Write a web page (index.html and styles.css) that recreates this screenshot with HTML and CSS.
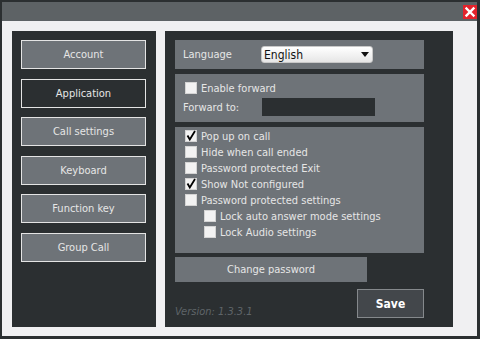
FILE: index.html
```html
<!DOCTYPE html>
<html>
	<head>
		<title>Settings</title>
		<meta charset="utf-8">
		<link rel="stylesheet" href="styles.css">
	</head>

	<body>
		<div class="window">
			<div class="titlebar">
				<div class="close">
					<svg width="14" height="14" viewBox="0 0 14 14"><path d="M3.5 3.5 L10.5 10.5 M10.5 3.5 L3.5 10.5" stroke="#fff" stroke-width="2.4" stroke-linecap="square"/></svg>
				</div>
			</div>
			<div class="content">
				<div class="menu">
					<div class="menu-btn">Account</div>
					<div class="menu-btn active">Application</div>
					<div class="menu-btn">Call settings</div>
					<div class="menu-btn">Keyboard</div>
					<div class="menu-btn">Function key</div>
					<div class="menu-btn">Group Call</div>
				</div>
				<div class="pane">
					<div class="section lang">
						<span class="label">Language</span>
						<div class="select">
							<span>English</span>
							<svg width="8" height="5" viewBox="0 0 8 5"><path d="M0 0 H8 L4 5 Z" fill="#111"/></svg>
						</div>
					</div>

					<div class="section forward">
						<div class="check-row">
							<span class="box"></span>Enable forward
						</div>
						<div class="fwd-row">
							<span class="label">Forward to:</span>
							<div class="input"></div>
						</div>
					</div>

					<div class="section options">
						<div class="check-row"><span class="box checked"><svg width="12" height="12" viewBox="0 0 12 12"><path d="M2.5 5.5 L4.8 9.5 L10 1" stroke="#000" stroke-width="1.8" fill="none"/></svg></span>Pop up on call</div>
						<div class="check-row"><span class="box"></span>Hide when call ended</div>
						<div class="check-row"><span class="box"></span>Password protected Exit</div>
						<div class="check-row"><span class="box checked"><svg width="12" height="12" viewBox="0 0 12 12"><path d="M2.5 5.5 L4.8 9.5 L10 1" stroke="#000" stroke-width="1.8" fill="none"/></svg></span>Show Not configured</div>
						<div class="check-row"><span class="box"></span>Password protected settings</div>
						<div class="check-row sub"><span class="box"></span>Lock auto answer mode settings</div>
						<div class="check-row sub"><span class="box"></span>Lock Audio settings</div>
					</div>

					<div class="change-btn">Change password</div>

					<div class="footer">
						<span class="version">Version: 1.3.3.1</span>
						<div class="save-btn">Save</div>
					</div>
				</div>
			</div>
		</div>
	</body>
</html>
```

FILE: styles.css
```css
html,body {
	margin: 0;
	padding: 0;
	background-color: #2b2f31;
}

body {
	font-family: 'DejaVu Sans Condensed', 'Liberation Sans', sans-serif;
	font-size: 11px;
	color: #e6e6e6;
}

.window {
	width: 480px;
	height: 339px;
	box-sizing: border-box;
	border: 2px solid #2b2f31;
	border-right-width: 3px;
	border-bottom-width: 3px;
	display: flex;
	flex-direction: column;
}

.titlebar {
	height: 19px;
	background-color: #5d6265;
	display: flex;
	justify-content: flex-end;
	align-items: flex-start;
}

.close {
	width: 14px;
	height: 14px;
	margin-top: 3px;
	background-color: #e3222b;
}

.close svg {
	display: block;
}

.content {
	flex: 1;
	background-color: #f0f0f2;
	padding: 10px 24px 9px 10px;
	display: flex;
	gap: 9px;
}

.menu {
	width: 144px;
	box-sizing: border-box;
	background-color: #2b2f31;
	padding: 9px 0 0 9px;
	display: flex;
	flex-direction: column;
	gap: 9.5px;
}

.menu-btn {
	width: 125px;
	height: 29px;
	box-sizing: border-box;
	border: 1px solid #e4e4e4;
	background-color: #6e7378;
	display: flex;
	align-items: center;
	justify-content: center;
}

.menu-btn.active {
	background-color: #2b2f31;
}

.pane {
	flex: 1;
	background-color: #2b2f31;
	padding: 9px 29px 9px 10px;
	display: flex;
	flex-direction: column;
}

.section {
	background-color: #6e7378;
	box-sizing: border-box;
}

.lang {
	height: 29px;
	display: flex;
	align-items: center;
	padding-left: 8px;
}

.lang .label {
	width: 78px;
}

.select {
	width: 112px;
	height: 17px;
	box-sizing: border-box;
	border: 1px solid #c8c8c8;
	border-radius: 3px;
	background: linear-gradient(#ffffff, #e6e6e6);
	color: #111;
	font-size: 12px;
	display: flex;
	align-items: center;
	justify-content: space-between;
	padding: 0 3px 0 2px;
}

.forward {
	height: 48px;
	margin-top: 5px;
	padding: 6px 0 0 8px;
}

.check-row {
	height: 16px;
	display: flex;
	align-items: center;
}

.forward .check-row {
	padding-left: 2px;
}

.box {
	width: 12px;
	height: 12px;
	box-sizing: border-box;
	background-color: #f2f2f2;
	border: 1px solid #d4d4d4;
	margin-right: 4px;
	position: relative;
}

.box svg {
	position: absolute;
	top: -1px;
	left: -1px;
}

.fwd-row {
	display: flex;
	align-items: center;
	margin-top: 2px;
}

.fwd-row .label {
	width: 79px;
}

.input {
	width: 113px;
	height: 18px;
	background-color: #2b2f31;
}

.options {
	height: 126px;
	margin-top: 5px;
	padding: 1px 0 0 10px;
}

.check-row.sub {
	padding-left: 19px;
}

.change-btn {
	width: 192px;
	height: 25px;
	margin-top: 4px;
	background-color: #6e7378;
	display: flex;
	align-items: center;
	justify-content: center;
}

.footer {
	margin-top: auto;
	display: flex;
	justify-content: space-between;
	align-items: flex-end;
}

.version {
	font-style: italic;
	color: #5f6569;
}

.save-btn {
	width: 67px;
	height: 29px;
	box-sizing: border-box;
	border: 1px solid #85898c;
	background-color: #43474b;
	color: #fff;
	font-weight: bold;
	font-size: 12px;
	display: flex;
	align-items: center;
	justify-content: center;
}
```
